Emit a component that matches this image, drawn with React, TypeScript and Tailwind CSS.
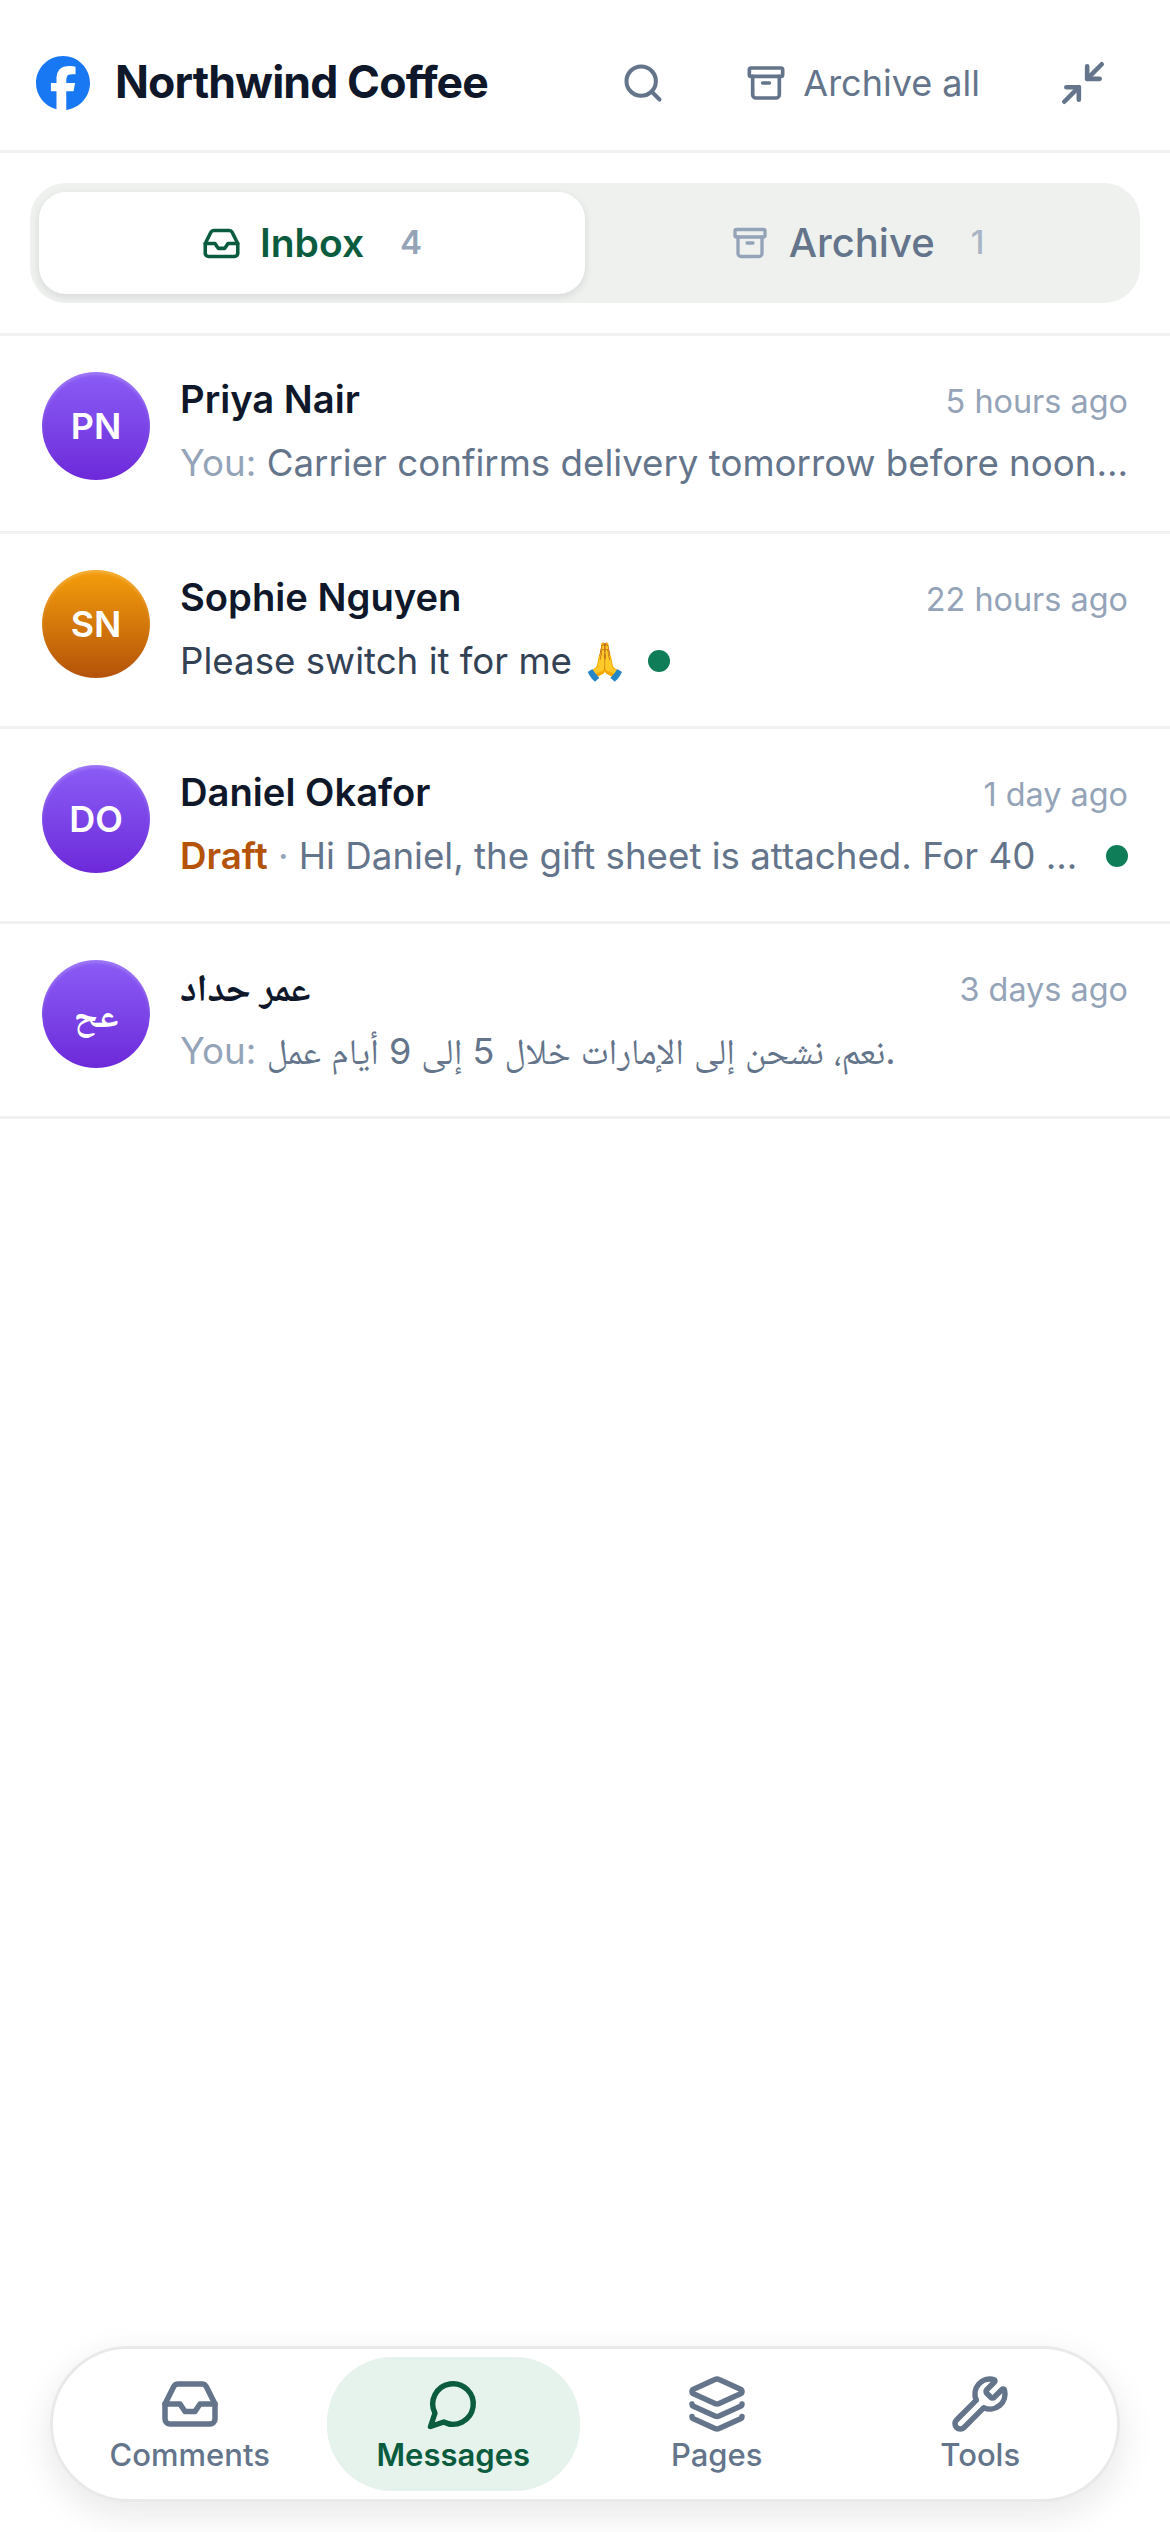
import { Archive, Inbox, Layers, Minimize2, Search, Wrench } from "lucide-react";
import { SiFacebook } from "react-icons/si";
import type { ReactNode } from "react";

interface Conversation {
  initials: string;
  name: string;
  time: string;
  tone: "violet" | "amber";
  preview: ReactNode;
  dot?: "inline" | "end";
  heavy?: boolean;
}

const conversations: Conversation[] = [
  {
    initials: "PN",
    name: "Priya Nair",
    time: "5 hours ago",
    tone: "violet",
    preview: (
      <>
        <span className="text-[#94a3b8]">You: </span>
        Carrier confirms delivery tomorrow before noon...
      </>
    ),
  },
  {
    initials: "SN",
    name: "Sophie Nguyen",
    time: "22 hours ago",
    tone: "amber",
    preview: <span className="text-[#334155]">Please switch it for me 🙏</span>,
    dot: "inline",
  },
  {
    initials: "DO",
    name: "Daniel Okafor",
    time: "1 day ago",
    tone: "violet",
    preview: (
      <>
        <span className="font-semibold text-[#b45309]">Draft</span>
        <span className="text-[#94a3b8]"> · </span>
        Hi Daniel, the gift sheet is attached. For 40 ...
      </>
    ),
    dot: "end",
  },
  {
    initials: "عح",
    name: "عمر حداد",
    time: "3 days ago",
    tone: "violet",
    heavy: true,
    preview: (
      <>
        <span className="text-[#94a3b8]">You: </span>
        <span className="text-[36px]">نعم، نشحن إلى الإمارات خلال 5 إلى 9 أيام عمل.</span>
      </>
    ),
  },
];

function ConversationRow({ item }: { item: Conversation }) {
  const gradient =
    item.tone === "amber"
      ? "bg-gradient-to-b from-[#f59e0b] to-[#b45309]"
      : "bg-gradient-to-b from-[#8b5cf6] to-[#6d28d9]";

  return (
    <div className="flex h-[195px] gap-[30px] border-b-[3px] border-[#f0f1f1] px-[42px] pt-[36px] first:h-[198px]">
      <div
        className={`flex size-[108px] shrink-0 items-center justify-center rounded-full text-[36px] text-white shadow-[inset_0_3px_3px_rgba(255,255,255,0.18)] ${item.heavy ? "font-bold" : "font-semibold"} ${gradient}`}
      >
        {item.initials}
      </div>
      <div className="min-w-0 flex-1">
        <div className="flex items-baseline justify-between gap-6">
          <span className={`text-[38.2px] leading-[54px] text-[#0f172a] ${item.heavy ? "font-bold" : "font-semibold"}`}>{item.name}</span>
          <span className="shrink-0 text-[32.4px] leading-[54px] text-[#94a3b8]">{item.time}</span>
        </div>
        <div className="mt-[7px] flex h-[54px] items-center gap-[20px]">
          <p className="min-w-0 text-[36.7px] leading-[54px] whitespace-nowrap text-[#64748b]">{item.preview}</p>
          {item.dot && (
            <span className={`size-[22px] shrink-0 rounded-full bg-[#0f7d58] ${item.dot === "end" ? "ml-auto" : ""}`} />
          )}
        </div>
      </div>
    </div>
  );
}

// older lucide message-circle, the tail is sharper than the current one
function MessageIcon({ className }: { className?: string }) {
  return (
    <svg viewBox="0 0 24 24" fill="none" stroke="currentColor" strokeWidth={2.4} strokeLinecap="round" strokeLinejoin="round" className={className}>
      <path d="M7.9 20A9 9 0 1 0 4 16.1L2 22Z" />
    </svg>
  );
}

const navItems = [
  { label: "Comments", icon: Inbox, size: "size-[60px]" },
  { label: "Messages", icon: MessageIcon, size: "size-[54px]", active: true },
  { label: "Pages", icon: Layers, size: "size-[60px]" },
  { label: "Tools", icon: Wrench, size: "size-[60px]" },
];

export default function App() {
  return (
    <div className="flex h-[2532px] w-[1170px] flex-col bg-white font-['Inter','Noto_Naskh_Arabic',sans-serif]">
      <header className="flex h-[153px] shrink-0 items-center border-b-[3px] border-[#f0f1f1] pt-[15px] pr-[62px] pl-[36px]">
        <SiFacebook className="size-[54px] text-[#1877f2]" />
        <span className="ml-[25px] flex-1 text-[44.6px] font-bold tracking-[-0.02em] text-[#0f172a]">Northwind Coffee</span>
        <Search className="size-[44px] text-[#64748b]" strokeWidth={2.2} />
        <div className="ml-[81px] flex items-center gap-[17px] text-[36px] text-[#64748b]">
          <Archive className="size-[40px]" strokeWidth={2.2} />
          Archive all
        </div>
        <Minimize2 className="ml-[78px] size-[50px] text-[#64748b]" strokeWidth={2.2} />
      </header>

      <div className="shrink-0 border-b-[3px] border-[#f0f1f1] px-[30px] py-[30px]">
        <div className="flex h-[120px] rounded-[36px] bg-[#eef1ee] p-[9px]">
          <div className="flex flex-1 items-center justify-center rounded-[27px] bg-white shadow-[0_3px_9px_rgba(15,23,42,0.1)]">
            <Inbox className="size-[39px] text-[#0b5c3f]" strokeWidth={2.2} />
            <span className="ml-[19px] text-[39px] font-semibold text-[#0b5c3f]">Inbox</span>
            <span className="ml-[36px] text-[33px] font-semibold text-[#94a3b8]">4</span>
          </div>
          <div className="flex flex-1 items-center justify-center">
            <Archive className="size-[36px] text-[#94a3b8]" strokeWidth={2.2} />
            <span className="ml-[21px] text-[40px] font-medium text-[#64748b]">Archive</span>
            <span className="ml-[36px] text-[33px] font-medium text-[#a9b5c6]">1</span>
          </div>
        </div>
      </div>

      <div className="flex-1">
        {conversations.map((item) => (
          <ConversationRow key={item.name} item={item} />
        ))}
      </div>

      <nav className="mx-[50px] mb-[30px] grid h-[156px] shrink-0 grid-cols-4 gap-[10px] rounded-[78px] border-[3px] border-[#e8e9e8] bg-white px-[10px] py-[8px] shadow-[0_12px_36px_rgba(15,23,42,0.1)]">
        {navItems.map(({ label, icon: Icon, size, active }) => (
          <div
            key={label}
            className={`flex flex-col items-center justify-end rounded-[65px] pb-[15px] ${active ? "bg-[#e6f3ec] text-[#0b5c3f]" : "text-[#64748b]"}`}
          >
            <div className="flex size-[60px] items-center justify-center">
              <Icon className={size} strokeWidth={2.2} />
            </div>
            <span className={`text-[31px] leading-[42px] ${active ? "font-semibold" : "font-medium"}`}>{label}</span>
          </div>
        ))}
      </nav>
    </div>
  );
}
